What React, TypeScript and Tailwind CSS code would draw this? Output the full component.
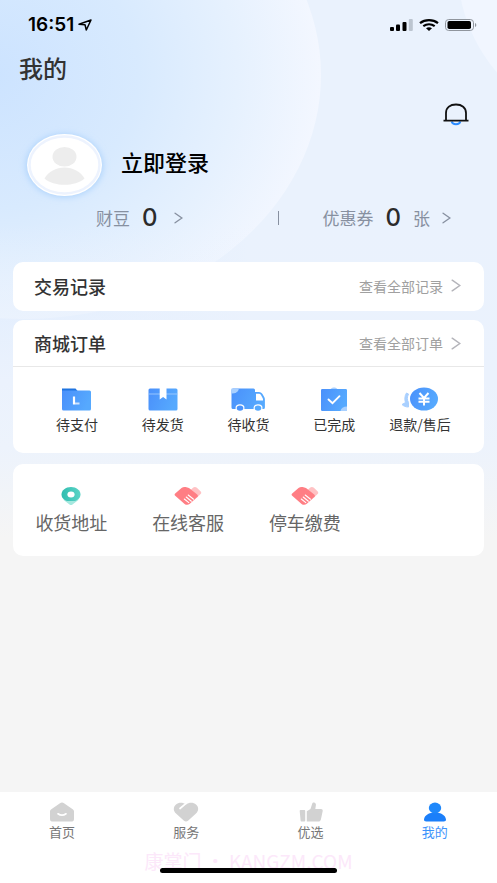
import React from 'react';

function Chevron({ className }: { className: string }) {
  return (
    <svg className={className} viewBox="0 0 10 13" fill="none" stroke="currentColor" strokeWidth="1.5" strokeLinecap="round">
      <path d="M1.2 1.2 8.8 6.5 1.2 11.8" />
    </svg>
  );
}

function Backdrop() {
  return (
    <svg className="absolute inset-x-0 top-0 h-[560px] w-full" viewBox="0 0 497 560" preserveAspectRatio="none" aria-hidden="true">
      <defs>
        <linearGradient id="base" x1="0" y1="0" x2="1" y2="0">
          <stop offset="0" stopColor="#dcebfe" />
          <stop offset="0.5" stopColor="#eaf2fd" />
          <stop offset="1" stopColor="#eaf2fd" />
        </linearGradient>
        <radialGradient id="bubble" gradientUnits="userSpaceOnUse" cx="-10" cy="75" r="330" gradientTransform="matrix(1 0 0 0.9 0 8)">
          <stop offset="0" stopColor="#cce3ff" />
          <stop offset="0.45" stopColor="#d8eafe" />
          <stop offset="0.75" stopColor="#e6f1fe" />
          <stop offset="1" stopColor="#f3f7ff" />
        </radialGradient>
        <linearGradient id="calm" x1="0" y1="0" x2="0" y2="1">
          <stop offset="0.4" stopColor="#ebf2fd" stopOpacity="0" />
          <stop offset="0.68" stopColor="#ebf2fd" />
          <stop offset="0.8" stopColor="#edf3fc" />
          <stop offset="0.96" stopColor="#f5f5f5" />
        </linearGradient>
      </defs>
      <rect width="497" height="560" fill="url(#base)" />
      <ellipse cx="24" cy="75" rx="297" ry="244" fill="url(#bubble)" />
      <ellipse cx="677" cy="-30" rx="219" ry="180" fill="#f1f6ff" />
      <rect width="497" height="560" fill="url(#calm)" />
    </svg>
  );
}

function StatusBar() {
  return (
    <div className="flex h-[50px] items-center justify-between pl-7 pr-5">
      <div className="flex items-center gap-1 font-['Inter',sans-serif] text-[19px] font-semibold text-black">
        <span>16:51</span>
        <svg className="h-3 w-[14px]" viewBox="0 0 14 12" fill="none" stroke="#000" strokeWidth="1.5" strokeLinejoin="round">
          <path d="M1 5.2 13 1 8.3 11 7 5.8Z" />
        </svg>
      </div>
      <div className="flex items-center gap-[6px]">
        <svg className="h-3 w-[23px]" viewBox="0 0 23 12">
          <rect x="0" y="8" width="4" height="4" rx="1" />
          <rect x="6" y="5.5" width="4" height="6.5" rx="1" />
          <rect x="12.5" y="3" width="4" height="9" rx="1" />
          <rect x="18.8" y="0" width="4" height="12" rx="1" fill="#bcc5d0" />
        </svg>
        <svg className="h-3 w-5" viewBox="0 0 20 12" fill="none" stroke="#000" strokeWidth="2.2">
          <path d="M1 4.2C6 .1 14 .1 19 4.2" />
          <path d="M4.3 7.2c3.4-2.6 8-2.6 11.4 0" />
          <path d="M7 9.2c1.8-1.3 4.2-1.3 6 0L10 12Z" fill="#000" stroke="none" />
        </svg>
        <svg className="h-3 w-8" viewBox="0 0 32 12">
          <rect x=".5" y=".5" width="28" height="11" rx="3.2" fill="none" stroke="#8f959d" />
          <rect x="2.5" y="2" width="23.5" height="8" rx="1.8" />
          <path d="M30 4c1.8.6 1.8 3.4 0 4Z" fill="#8f959d" />
        </svg>
      </div>
    </div>
  );
}

function BlueFill({ id }: { id: string }) {
  return (
    <defs>
      <linearGradient id={id} x1="0" y1="0" x2="1" y2="0.3">
        <stop offset="0" stopColor="#4a90fb" />
        <stop offset="1" stopColor="#56a9fe" />
      </linearGradient>
    </defs>
  );
}

const orders = [
  {
    label: '待支付',
    icon: (
      <svg className="h-6 w-10" viewBox="0 0 40 24">
        <BlueFill id="pay" />
        <path d="M5 8V1.5h13.5L21 4.5V8Z" fill="#1f74e0" />
        <path d="M5 3.5h27.5a1.5 1.5 0 0 1 1.5 1.5v17a1.5 1.5 0 0 1-1.5 1.5h-26A1.5 1.5 0 0 1 5 22Z" fill="url(#pay)" />
        <path d="M17 9.5v8" stroke="#fff" strokeWidth="2.2" />
        <path d="M18 16.5h4.5" stroke="#cfe3ff" strokeWidth="2" />
      </svg>
    ),
  },
  {
    label: '待发货',
    icon: (
      <svg className="h-6 w-10" viewBox="0 0 40 24">
        <BlueFill id="box" />
        <path d="M5.5 3A1.5 1.5 0 0 1 7 1.5h26A1.5 1.5 0 0 1 34.5 3v19a1.5 1.5 0 0 1-1.5 1.5H7A1.5 1.5 0 0 1 5.500 22Z" fill="url(#box)" />
        <path d="M5.5 7h29" stroke="#a9d0ff" strokeWidth=".8" />
        <path d="M16.7 1h6.8v11.5L20.100 10l-3.400 2.500Z" fill="#fff" />
      </svg>
    ),
  },
  {
    label: '待收货',
    icon: (
      <svg className="h-6 w-10" viewBox="0 0 40 24">
        <BlueFill id="truck" />
        <path d="M3.5 3A1.5 1.5 0 0 1 5 1.5h20.500A1.500 1.500 0 0 1 27 3v2h4a4 4 0 0 1 3.300 1.700l1.800 3a5 5 0 0 1 .8 2.600V20.500a1.500 1.500 0 0 1-1.500 1.500H5a1.500 1.500 0 0 1-1.500-1.500Z" fill="url(#truck)" />
        <path d="M3.5 1.5H11a7 5.5 0 0 1-7.5 5Z" fill="#a9d0ff" />
        <path d="M28 6.800h3c.8 0 1.400.4 1.800 1l2.200 4v1.700h-7Z" fill="#fff" />
        <ellipse cx="12" cy="21" rx="4.500" ry="3.700" fill="#fff" />
        <ellipse cx="12" cy="21.100" rx="3.300" ry="2.700" fill="#4a93fb" />
        <ellipse cx="30" cy="21" rx="4.500" ry="3.700" fill="#fff" />
        <ellipse cx="30" cy="21.100" rx="3.300" ry="2.700" fill="#56a9fe" />
      </svg>
    ),
  },
  {
    label: '已完成',
    icon: (
      <svg className="h-6 w-10" viewBox="0 0 40 24">
        <BlueFill id="done" />
        <path d="M12 2.200h4.500c1.300-2.300 5.700-2.300 7 0H28v2H12Z" fill="#a9d0ff" />
        <path d="M7 3.200A1.200 1.200 0 0 1 8.200 2h23.600A1.200 1.200 0 0 1 33 3.200V24H8.200A1.200 1.200 0 0 1 7 22.800Z" fill="url(#done)" />
        <path d="M33 19.500V24h-6.500a6.500 4.800 0 0 1 6.500-4.500Z" fill="#a9d0ff" />
        <path d="m14.500 12.500 4 3.700 7-7" fill="none" stroke="#fff" strokeWidth="1.900" strokeLinecap="round" />
      </svg>
    ),
  },
  {
    label: '退款/售后',
    icon: (
      <svg className="h-6 w-10" viewBox="0 0 40 24">
        <BlueFill id="refund" />
        <path d="M6.500 6C4.500 9 4.500 13 5.500 15.500L2 17.500c1.500 1.500 3.500 2.500 6.500 2.500v-4.500C7 13 7 10 8.500 7Z" fill="#a9d0ff" stroke="#a9d0ff" strokeWidth="1" strokeLinejoin="round" />
        <ellipse cx="24" cy="12" rx="14" ry="11.500" fill="url(#refund)" />
        <path d="m19.500 6 4.500 5 4.500-5M24 11v7.500M18.500 11.500h11M18.500 14.800h11" fill="none" stroke="#fff" strokeWidth="2" />
      </svg>
    ),
  },
];

function Handshake() {
  return (
    <svg className="h-5 w-7" viewBox="0 0 28 20">
      <path d="M16 4.500 19 1.700c1-.9 2.800-.9 3.900 0l3.600 3.500c1 .9 1 2 .1 2.900L23 11.500Z" fill="#ffc2c4" />
      <path d="M1.200 7.500 7.500 2c1.400-1 3.200-1.200 5-.7l2.500.8 8.200 6.400c1 .9.900 2-.1 2.800l-7.300 6.500c-1.500 1.300-3.700 1.300-5.200.1L1.200 9.700c-.8-.7-.8-1.500 0-2.200Z" fill="#ff7e84" />
      <path d="m14.200 9 5.300 4.200M12.200 11l5.200 4.200M10.300 13l4.500 3.600" stroke="#fff" strokeWidth="1.100" strokeLinecap="round" />
    </svg>
  );
}

const services = [
  {
    label: '收货地址',
    icon: (
      <svg className="h-5 w-7" viewBox="0 0 28 20">
        <defs>
          <linearGradient id="pin" x1="0" y1="0" x2="1" y2="0">
            <stop offset="0" stopColor="#30bdb0" />
            <stop offset="1" stopColor="#5bd4c6" />
          </linearGradient>
        </defs>
        <path d="M6 13.500h16l-6.500 5c-.9.700-2.100.7-3 0Z" fill="#a5e8df" />
        <path d="M4.500 8.500C4.500 4.300 8.700 1 14 1s9.500 3.300 9.500 7.500c0 3-2.300 5.600-5.500 6.500h-8c-3.200-.9-5.500-3.500-5.500-6.500Z" fill="url(#pin)" />
        <ellipse cx="14" cy="8.500" rx="3.600" ry="2.900" fill="#fff" />
      </svg>
    ),
  },
  { label: '在线客服', icon: <Handshake /> },
  { label: '停车缴费', icon: <Handshake /> },
];

const tabs = [
  {
    label: '首页',
    icon: (
      <svg className="h-5 w-[26px]" viewBox="0 0 26 20">
        <path d="M11 1.200c1.200-.9 2.800-.9 4 0l8.700 6c.8.600 1.300 1.300 1.300 2.300V17a3 2.600 0 0 1-3 2.600H4A3 2.600 0 0 1 1 17V9.500c0-1 .5-1.700 1.300-2.300Z" fill="#d2d2d2" />
        <path d="M9 11.800c2.300 1.600 5.700 1.600 8 0" fill="none" stroke="#fff" strokeWidth="1.700" strokeLinecap="round" />
      </svg>
    ),
  },
  {
    label: '服务',
    icon: (
      <svg className="h-5 w-[26px]" viewBox="0 0 26 20">
        <path d="M13 2.500C16 .2 20.500.2 23 2.500c2.900 2.600 2.900 6.300 0 9l-8 7.200c-1.200 1-2.800 1-4 0l-8-7.200c-2.900-2.700-2.900-6.400 0-9C5.500.2 10 .2 13 2.500Z" fill="#d2d2d2" />
        <path d="M12.800 1.700 7 6.500" stroke="#fff" strokeWidth="1.700" strokeLinecap="round" />
      </svg>
    ),
  },
  {
    label: '优选',
    icon: (
      <svg className="h-5 w-[26px]" viewBox="0 0 26 20">
        <path d="M2.600 8h3.600c.6 0 1 .4 1 1v9.600c0 .6-.4 1-1 1H3.600c-.6 0-1-.4-1-1L1.700 9c0-.6.3-1 .9-1Z" fill="#d2d2d2" />
        <path d="M8.800 9.300 12.500 7l1.600-5c.4-1.200 1.500-1.700 2.600-1.200 1 .4 1.400 1.400 1.200 2.500L17.300 7H23c1.200 0 1.900.9 1.700 2l-1.800 8.500c-.3 1.300-1.200 2.100-2.600 2.100H8.800Z" fill="#d2d2d2" />
      </svg>
    ),
  },
  {
    label: '我的',
    active: true,
    icon: (
      <svg className="h-5 w-[26px]" viewBox="0 0 26 20">
        <path d="M2 17.600c.4-4.300 5-7 11-7s10.600 2.700 11 7c.1 1.200-.8 2-2.200 2H4.200c-1.400 0-2.300-.8-2.200-2Z" fill="#1b7ffa" />
        <ellipse cx="13" cy="6" rx="6.200" ry="5.400" fill="#1f88fb" />
      </svg>
    ),
  },
];

export default function App() {
  return (
    <div className="relative flex min-h-screen flex-col bg-[#f5f5f5] font-['Noto_Sans_CJK_SC',sans-serif]">
      <Backdrop />

      <header className="relative">
        <StatusBar />
        <h1 className="pl-[19px] text-2xl leading-9 font-medium text-[#333]">我的</h1>
        <div className="flex justify-end pt-4 pr-7">
          <button type="button" aria-label="消息">
            <svg className="h-6 w-[26px]" viewBox="0 0 26 24" fill="none" strokeWidth="1.800">
              <path d="M8.700 19.500c.8 3.500 7.800 3.500 8.600 0" stroke="#2a8bff" strokeWidth="2" />
              <path d="M3 18.700V11C3 5.500 7.200 2.500 13 2.500S23 5.500 23 11v7.700M.5 18.700h25" stroke="#111" />
            </svg>
          </button>
        </div>

        <div className="flex items-center gap-[19px] pl-[27px] pt-2">
          <svg className="h-[62px] w-[75px] overflow-visible" viewBox="0 0 75 62" aria-hidden="true">
            <defs>
              <filter id="glow" x="-20%" y="-20%" width="140%" height="140%">
                <feGaussianBlur stdDeviation="3.500" />
              </filter>
            </defs>
            <ellipse cx="37.500" cy="31.500" rx="38" ry="31" fill="#a6cffc" filter="url(#glow)" />
            <ellipse cx="37.500" cy="31" rx="37.500" ry="31" fill="#fff" />
            <ellipse cx="37.500" cy="31" rx="35" ry="28.500" fill="none" stroke="#edf3fe" strokeWidth="2.500" />
            <ellipse cx="37.500" cy="22.700" rx="12" ry="9.800" fill="#ededed" />
            <path d="M17.500 44.500c4-7 11.500-11 20-11s16 4 20 11c-4.500 4-12 6.300-20 6.300s-15.500-2.300-20-6.300Z" fill="#ededed" />
          </svg>
          <button type="button" className="pb-2 text-[22px] leading-8 font-medium text-black">立即登录</button>
        </div>

        <div className="flex h-11 items-center pl-24 pr-[46px] text-[17px] text-[#8790a0]">
          <a href="#beans" className="flex items-center gap-3">
            <span>财豆</span>
            <span className="font-['Inter',sans-serif] text-2xl font-medium text-[#2b2b2b]">0</span>
            <Chevron className="ml-1 h-3 w-[9px]" />
          </a>
          <span className="mr-11 ml-auto h-[14px] w-px bg-[#8790a0]" />
          <a href="#coupons" className="flex items-center gap-3">
            <span>优惠券</span>
            <span className="font-['Inter',sans-serif] text-2xl font-medium text-[#2b2b2b]">0</span>
            <span>张</span>
            <Chevron className="h-3 w-[9px]" />
          </a>
        </div>
      </header>

      <main className="relative flex flex-col px-[13px] pt-[22px] pb-6">
        <section className="flex h-[49px] items-center justify-between rounded-[10px] bg-white pb-[2px] pl-[21px] pr-[23px]">
          <h2 className="text-lg font-medium text-[#333]">交易记录</h2>
          <a href="#records" className="flex items-center gap-2 text-sm text-[#a0a0a0]">
            查看全部记录
            <Chevron className="h-[13px] w-[10px] text-[#b4b4ba]" />
          </a>
        </section>

        <section className="mt-[9px] rounded-[10px] bg-white">
          <div className="flex h-[47px] items-center justify-between border-b border-[#e8e8e8] pl-[21px] pr-[23px]">
            <h2 className="text-lg font-medium text-[#333]">商城订单</h2>
            <a href="#orders" className="flex items-center gap-2 text-sm text-[#a0a0a0]">
              查看全部订单
              <Chevron className="h-[13px] w-[10px] text-[#b4b4ba]" />
            </a>
          </div>
          <div className="grid grid-cols-5 px-[21px] pt-5 pb-[19px]">
            {orders.map((item) => (
              <a key={item.label} href="#orders" className="flex flex-col items-center gap-[3px] text-sm text-[#333]">
                {item.icon}
                <span className="whitespace-nowrap">{item.label}</span>
              </a>
            ))}
          </div>
        </section>

        <section className="mt-[11px] grid grid-cols-4 rounded-[10px] bg-white pt-[22px] pr-1 pb-5">
          {services.map((item) => (
            <a key={item.label} href="#services" className="flex flex-col items-center gap-[2px] text-lg text-[#666]">
              {item.icon}
              <span>{item.label}</span>
            </a>
          ))}
        </section>
      </main>

      <nav className="relative mt-auto bg-white pb-[10px]">
        <div className="grid grid-cols-4 pt-[10px]">
          {tabs.map((tab) => (
            <a
              key={tab.label}
              href="#tab"
              className={`flex flex-col items-center text-[13px] leading-5 ${tab.active ? 'text-[#3d93fb]' : 'text-[#777]'}`}
            >
              {tab.icon}
              <span>{tab.label}</span>
            </a>
          ))}
        </div>
        <p className="absolute inset-x-0 bottom-2 text-center text-[19px] leading-7 text-[#fce8fa]">康掌门 • KANGZM.COM</p>
        <div className="relative mx-auto mt-[26px] h-[5px] w-[177px] rounded-full bg-black" />
      </nav>
    </div>
  );
}
